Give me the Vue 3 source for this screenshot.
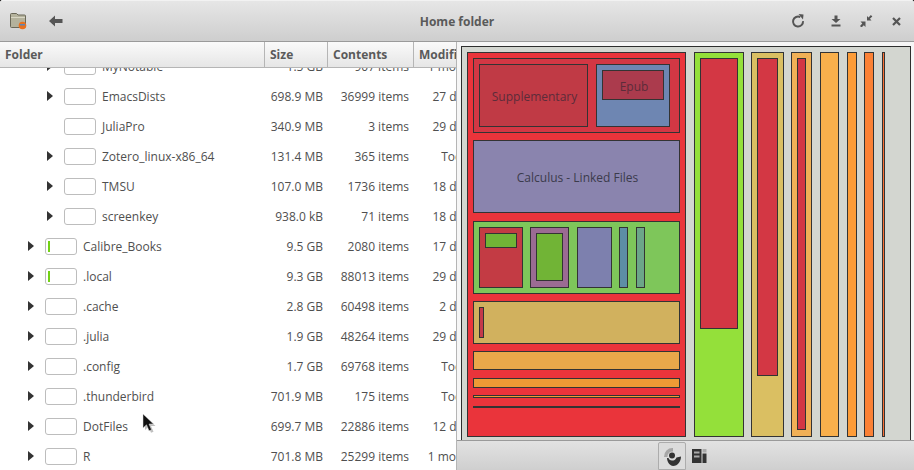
<script setup>
const rows = [
  { name: 'MyNotable', size: '1.5 GB', items: '907 items', date: '1 month', depth: 1, arrow: true, bar: 0 },
  { name: 'EmacsDists', size: '698.9 MB', items: '36999 items', date: '27 days', depth: 1, arrow: true, bar: 0 },
  { name: 'JuliaPro', size: '340.9 MB', items: '3 items', date: '29 days', depth: 1, arrow: false, bar: 0 },
  { name: 'Zotero_linux-x86_64', size: '131.4 MB', items: '365 items', date: 'Today', depth: 1, arrow: true, bar: 0 },
  { name: 'TMSU', size: '107.0 MB', items: '1736 items', date: '18 days', depth: 1, arrow: true, bar: 0 },
  { name: 'screenkey', size: '938.0 kB', items: '71 items', date: '18 days', depth: 1, arrow: true, bar: 0 },
  { name: 'Calibre_Books', size: '9.5 GB', items: '2080 items', date: '17 days', depth: 0, arrow: true, bar: 1 },
  { name: '.local', size: '9.3 GB', items: '88013 items', date: '29 days', depth: 0, arrow: true, bar: 1 },
  { name: '.cache', size: '2.8 GB', items: '60498 items', date: '2 days', depth: 0, arrow: true, bar: 0 },
  { name: '.julia', size: '1.9 GB', items: '48264 items', date: '29 days', depth: 0, arrow: true, bar: 0 },
  { name: '.config', size: '1.7 GB', items: '69768 items', date: 'Today', depth: 0, arrow: true, bar: 0 },
  { name: '.thunderbird', size: '701.9 MB', items: '175 items', date: 'Today', depth: 0, arrow: true, bar: 0 },
  { name: 'DotFiles', size: '699.7 MB', items: '22886 items', date: '12 days', depth: 0, arrow: true, bar: 0 },
  { name: 'R', size: '701.8 MB', items: '25299 items', date: '1 month', depth: 0, arrow: true, bar: 0 }
]

// x1, y1, x2, y2 in window coordinates
const nodes = [
  [467, 52, 686, 437, '#ea343b'],
  [473, 58, 680, 133, '#d33744'],
  [479, 64, 588, 127, '#c03a45', 'Supplementary', '#5c2c3a'],
  [596, 64, 670, 127, '#6e86b2'],
  [602, 70, 664, 100, '#ab3b4d', 'Epub', '#5c2c3a'],
  [473, 140, 680, 213, '#8a84ae', 'Calculus - Linked Files', '#3b3b4c'],
  [473, 221, 680, 294, '#7ec65a'],
  [479, 227, 523, 288, '#c33b44'],
  [485, 233, 517, 248, '#71b436'],
  [530, 227, 569, 288, '#9b6b93'],
  [536, 233, 563, 281, '#71b436'],
  [577, 227, 612, 288, '#7d80ae'],
  [619, 227, 628, 288, '#5d8ea6'],
  [636, 227, 645, 288, '#6ca589'],
  [473, 301, 680, 344, '#d1b15e'],
  [479, 307, 484, 338, '#c4394a'],
  [473, 351, 680, 370, '#e9a84a'],
  [473, 378, 680, 388, '#ee9a35'],
  [473, 395, 680, 398, '#ee9a35'],
  [473, 406, 680, 408, '#333333'],
  [694, 52, 744, 437, '#94e03a'],
  [700, 58, 738, 329, '#d33744'],
  [751, 52, 784, 437, '#dabf62'],
  [757, 58, 778, 376, '#d33744'],
  [791, 52, 812, 437, '#f0b056'],
  [797, 58, 806, 430, '#d33744'],
  [820, 52, 839, 437, '#f9b04c'],
  [847, 52, 857, 437, '#fd9c38'],
  [864, 52, 874, 437, '#fb8135'],
  [882, 52, 885, 437, '#fb7035']
]

const nodeStyle = (n) => ({
  left: n[0] - 462 + 'px',
  top: n[1] - 47 + 'px',
  width: n[2] - n[0] + 'px',
  height: n[3] - n[1] + 'px',
  background: n[4],
  color: n[6]
})
</script>

<template>
  <div class="window">
    <header class="titlebar">
      <div class="tools">
        <svg class="folder-icon" width="18" height="18" viewBox="0 0 18 18">
          <path d="M1.500 2.500q0-1 1-1h5l1.500 1.500h6.500q1 0 1 1v10.500q0 1-1 1h-13q-1 0-1-1z" fill="#b4b29c" stroke="#6a6858" />
          <path d="M2 5.500h14" stroke="#d8d6c4" />
          <circle cx="13.500" cy="13.500" r="3.800" fill="#e8701e" />
          <path d="M11 12.800h5" stroke="#5a86b8" stroke-width="1.600" />
        </svg>
        <svg class="back-icon" width="14" height="12" viewBox="0 0 14 12">
          <path d="M0 6l6-5.500v3.500h7.500v4H6v3.500z" fill="#555" />
        </svg>
      </div>
      <div class="title">Home folder</div>
      <div class="controls">
        <span class="ctl reload">
          <svg width="14" height="14" viewBox="0 0 14 14">
            <path d="M9.300 3.100a5 5 0 1 0 2.700 4" fill="none" stroke="#555" stroke-width="2" />
            <path d="M7.500 0l5 0.500-0.500 5z" fill="#555" />
          </svg>
        </span>
        <span class="ctl">
          <svg width="10" height="12" viewBox="0 0 10 12">
            <path d="M3.500 0.500h3v3.500h3l-4.500 4-4.500-4h3z M0.500 9.500h9v2h-9z" fill="#555" />
          </svg>
        </span>
        <span class="ctl">
          <svg width="13" height="12" viewBox="0 0 13 12">
            <path d="M7 5.500V1l1.500 1.500L10.900 0l1.400 1.400-2.400 2.400 1.600 1.700z M5.500 6.500V12L3.800 10.200 1.500 12.500 0 11l2.300-2.400L0.500 6.500z" fill="#555" />
          </svg>
        </span>
        <span class="ctl">
          <svg width="9" height="9" viewBox="0 0 9 9">
            <path d="M1 1l7 7m0-7l-7 7" stroke="#555" stroke-width="2.200" />
          </svg>
        </span>
      </div>
    </header>

    <main class="content">
      <section class="files">
        <div class="head">
          <div class="head-cell col-name">Folder</div>
          <div class="head-cell col-size">Size</div>
          <div class="head-cell col-items">Contents</div>
          <div class="head-cell col-date">Modified</div>
        </div>
        <div class="list">
          <div class="rows">
            <div v-for="row in rows" :key="row.name" class="row">
              <div class="col-name cell-name" :class="row.depth ? 'nested' : 'top'">
                <span class="arrow" :class="{ hidden: !row.arrow }"></span>
                <span class="usage"><i v-if="row.bar"></i></span>
                <span class="name">{{ row.name }}</span>
              </div>
              <div class="col-size value">{{ row.size }}</div>
              <div class="col-items value">{{ row.items }}</div>
              <div class="col-date value">{{ row.date }}</div>
            </div>
          </div>
        </div>
      </section>

      <section class="preview">
        <div class="canvas-wrap">
          <div class="canvas">
            <div v-for="(n, i) in nodes" :key="i" class="node" :class="{ labelled: n[5] }" :style="nodeStyle(n)">{{ n[5] }}</div>
          </div>
        </div>
        <footer class="statusbar">
          <button class="mode active">
            <svg width="20" height="20" viewBox="0 0 20 20">
              <path d="M2 11A8.500 8.500 0 0 1 11 2V5.500A5 5 0 0 0 5.500 11z" fill="#a6a6a6" />
              <path d="M5 12C5 17 9 20 11 20C16 20 19 15 19 10.500L14.500 11.500C13.500 14 12 14.500 10 14.500C8 14.500 7 13.500 6.500 12z" fill="#333" />
              <circle cx="10" cy="9.500" r="3" fill="#333" />
            </svg>
          </button>
          <button class="mode">
            <svg width="16" height="15" viewBox="0 0 16 15">
              <path d="M0 0h9.500v14H0z" fill="#333" />
              <path d="M2 2.500h5.500v2H2zM2 6.500h5.500v2H2z" fill="#aaa" />
              <path d="M10.500 0h4v3.500h-4z" fill="#aaa" />
              <path d="M10.500 4.500h4V14h-4z" fill="#333" />
            </svg>
          </button>
        </footer>
      </section>
    </main>

    <svg class="cursor" width="16" height="22" viewBox="0 0 16 22">
      <path d="M3 3v14l3.500-3.200 2.500 6 2.500-1-2.500-5.800h4.500z" fill="#000" opacity="0.25" />
      <path d="M1 1v14l3.500-3.200 2.500 6 2.500-1-2.500-5.800h4.500z" fill="#111" stroke="#ddd" stroke-width="0.500" />
    </svg>
  </div>
</template>

<style scoped>
.window {
  position: relative;
  width: 914px;
  height: 470px;
  overflow: hidden;
  display: flex;
  flex-direction: column;
  background: #fff;
  color: #4f4f4f;
  font-family: "Open Sans", sans-serif;
  font-size: 12px;
  border-radius: 3px 3px 0 0;
}

.titlebar {
  height: 42px;
  flex: none;
  display: flex;
  align-items: center;
  box-sizing: border-box;
  border-top: 1px solid #f2f2f2;
  border-bottom: 1px solid #9a9a9a;
  background: linear-gradient(#e6e6e6, #cecece);
}

.tools {
  width: 300px;
  display: flex;
  align-items: center;
  padding-left: 9px;
  box-sizing: border-box;
}

.back-icon {
  margin-left: 22px;
}

.title {
  flex: 1;
  text-align: center;
  font-weight: 700;
  color: #5a5a5a;
  padding-left: 4px;
  margin-right: 4px;
}

.controls {
  width: 300px;
  box-sizing: border-box;
  display: flex;
  align-items: center;
  justify-content: flex-end;
  padding-right: 3px;
}

.ctl {
  width: 30px;
  display: flex;
  justify-content: center;
}

.ctl.reload {
  margin-right: 8px;
}

.content {
  flex: 1;
  min-height: 0;
  display: flex;
}

.files {
  width: 456px;
  flex: none;
  display: flex;
  flex-direction: column;
  overflow: hidden;
}

.head {
  height: 26px;
  flex: none;
  display: flex;
  box-sizing: border-box;
  border-bottom: 1px solid #b5b5b5;
  background: linear-gradient(#fafafa, #e6e6e6);
  font-weight: 700;
  color: #5a5a5a;
}

.head-cell {
  box-sizing: border-box;
  line-height: 25px;
  padding-left: 5px;
  border-right: 1px solid #b5b5b5;
  white-space: nowrap;
  overflow: hidden;
}

.head-cell:last-child {
  border-right: 0;
}

.col-name {
  width: 265px;
  flex: none;
  box-sizing: border-box;
}

.col-size {
  width: 63px;
  flex: none;
  box-sizing: border-box;
}

.col-items {
  width: 86px;
  flex: none;
  box-sizing: border-box;
}

.col-date {
  width: 66px;
  flex: none;
  box-sizing: border-box;
}

.list {
  flex: 1;
  min-height: 0;
  overflow: hidden;
}

.rows {
  margin-top: -17px;
}

.row {
  height: 30px;
  display: flex;
  align-items: center;
}

.cell-name {
  display: flex;
  align-items: center;
}

.cell-name.nested {
  padding-left: 47px;
}

.cell-name.top {
  padding-left: 28px;
}

.arrow {
  width: 0;
  height: 0;
  border-left: 6px solid #333;
  border-top: 5px solid transparent;
  border-bottom: 5px solid transparent;
  margin-right: 11px;
}

.arrow.hidden {
  visibility: hidden;
}

.usage {
  width: 32px;
  height: 17px;
  box-sizing: border-box;
  border: 1px solid #bdbdbd;
  border-radius: 3px;
  padding: 2px 2px;
  display: block;
}

.usage i {
  display: block;
  width: 2px;
  height: 11px;
  background: #73d216;
}

.name {
  margin-left: 6px;
  white-space: nowrap;
}

.value {
  text-align: right;
  white-space: nowrap;
  padding-right: 5px;
}

.preview {
  flex: 1;
  min-width: 0;
  display: flex;
  flex-direction: column;
  border-left: 1px solid #b5b5b5;
}

.canvas-wrap {
  flex: 1;
  min-height: 0;
  display: flex;
  padding: 4px 3px 0 4px;
  background: #f6f6f6;
}

.canvas {
  position: relative;
  flex: 1;
  box-sizing: border-box;
  border: 1px solid #2e2e2e;
  border-bottom: 0;
  background: #d3d6d0;
}

.node {
  position: absolute;
  box-sizing: border-box;
  border: 1px solid #333;
  display: flex;
  align-items: center;
  justify-content: center;
  white-space: nowrap;
}

.node.labelled {
  padding: 2px 0 0 2px;
}

.statusbar {
  height: 30px;
  flex: none;
  box-sizing: border-box;
  display: flex;
  justify-content: center;
  align-items: flex-end;
  padding-left: 1px;
  border-top: 1px solid #9a9a9a;
  background: linear-gradient(#e2e2e2, #cfcfcf);
}

.mode {
  width: 28px;
  height: 28px;
  padding: 0;
  border: 1px solid transparent;
  background: none;
  display: flex;
  align-items: center;
  justify-content: center;
}

.mode.active {
  border-color: #acacac;
  background: #dcdcdc;
  border-radius: 2px 2px 0 0;
}

.cursor {
  position: absolute;
  left: 142px;
  top: 413px;
}
</style>

<style>
html,
body {
  background: #000;
}
</style>
